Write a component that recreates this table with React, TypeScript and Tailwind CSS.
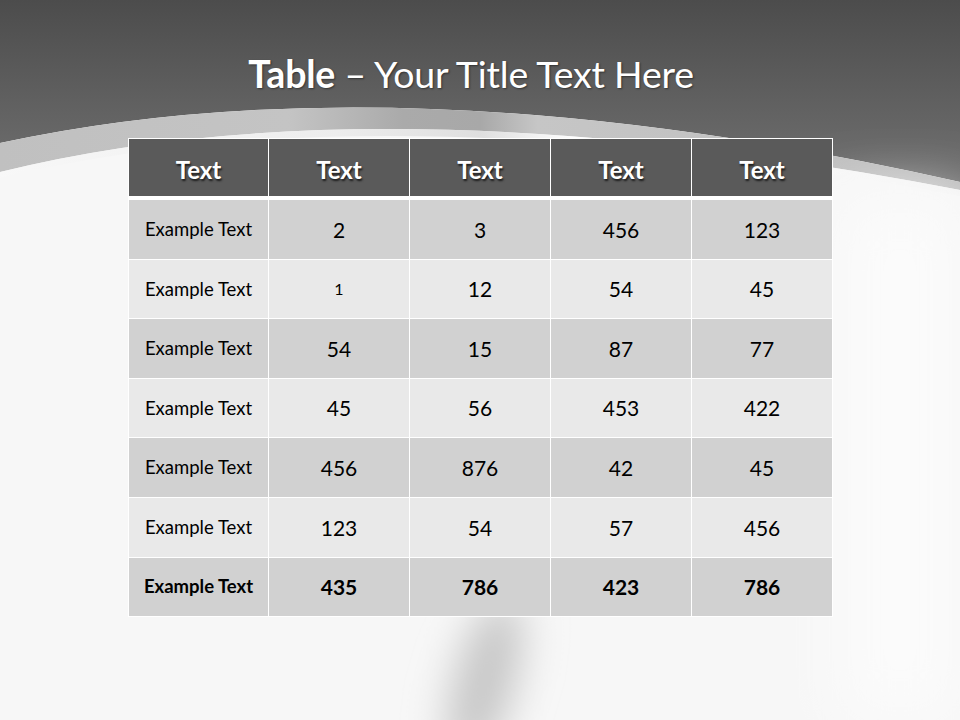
import React from "react";

const rows: { label: string; vals: string[]; bold?: boolean }[] = [
  { label: "Example Text", vals: ["2", "3", "456", "123"] },
  { label: "Example Text", vals: ["1", "12", "54", "45"] },
  { label: "Example Text", vals: ["54", "15", "87", "77"] },
  { label: "Example Text", vals: ["45", "56", "453", "422"] },
  { label: "Example Text", vals: ["456", "876", "42", "45"] },
  { label: "Example Text", vals: ["123", "54", "57", "456"] },
  { label: "Example Text", vals: ["435", "786", "423", "786"], bold: true },
];

function Background() {
  return (
    <svg className="absolute inset-0" width="960" height="720" viewBox="0 0 960 720">
      <defs>
        <linearGradient id="top" x1="0" y1="0" x2="0" y2="1">
          <stop offset="0" stopColor="#4c4c4c" />
          <stop offset="1" stopColor="#707070" />
        </linearGradient>
        <linearGradient id="band" x1="0" y1="0" x2="1" y2="0">
          <stop offset="0" stopColor="#c0c0c0" />
          <stop offset="0.3" stopColor="#c4c4c4" />
          <stop offset="0.42" stopColor="#aaaaaa" />
          <stop offset="0.5" stopColor="#a8a8a8" />
          <stop offset="0.56" stopColor="#c6c6c6" />
          <stop offset="1" stopColor="#bdbdbd" />
        </linearGradient>
        <linearGradient id="hl" x1="0" y1="0" x2="1" y2="0">
          <stop offset="0" stopColor="#f8f8f8" />
          <stop offset="0.35" stopColor="#ececec" />
          <stop offset="0.5" stopColor="#dcdcdc" />
          <stop offset="0.6" stopColor="#ffffff" />
          <stop offset="1" stopColor="#f4f4f4" />
        </linearGradient>
        <filter id="blur" x="-200%" y="-100%" width="500%" height="300%">
          <feGaussianBlur stdDeviation="20" />
        </filter>
        <filter id="blur2" x="-50%" y="-50%" width="200%" height="200%">
          <feGaussianBlur stdDeviation="30" />
        </filter>
      </defs>
      <rect x="0" y="0" width="960" height="720" fill="#f7f7f7" />
      <path d="M0,0 H960 V182 Q400,56 0,143 Z" fill="url(#top)" />
      <path d="M0,143 Q400,56 960,182 L960,190 Q380,78 0,172 Z" fill="url(#band)" />
      <path d="M0,172 Q380,78 960,190 L960,196 Q380,86 0,178 Z" fill="url(#hl)" opacity="0.9" />
      <rect x="840" y="200" width="120" height="520" fill="#fbfbfb" filter="url(#blur2)" />
      <ellipse cx="485" cy="680" rx="30" ry="85" transform="rotate(16 485 680)" fill="#c6c6c6" filter="url(#blur)" />
    </svg>
  );
}

export default function App() {
  const font = { fontFamily: "Lato, 'Liberation Sans', sans-serif" };
  return (
    <div className="relative w-[960px] h-[720px] overflow-hidden" style={font}>
      <Background />
      <div className="relative flex flex-col">
        <div className="h-[138px] flex justify-center pt-[49px] pr-[18px]">
          <h1 className="text-[37.5px] leading-[50px] text-white [text-shadow:1px_1px_2px_rgba(0,0,0,0.45)] tracking-[-0.2px]">
            <span className="font-bold">Table</span> – Your Title Text Here
          </h1>
        </div>
        <div className="ml-[128px] w-[705px] bg-white p-px flex flex-col gap-px">
          <div className="grid grid-cols-[139px_140px_140px_140px_140px] gap-px h-[57px]">
            {["Text", "Text", "Text", "Text", "Text"].map((t, i) => (
              <div
                key={i}
                className="bg-[#5a5a5a] flex items-center justify-center pt-[5px] text-white font-bold text-[24px] [text-shadow:1px_2px_2px_rgba(0,0,0,0.7)]"
              >
                {t}
              </div>
            ))}
          </div>
          <div className="h-[2px]" />
          {rows.map((r, ri) => (
            <div
              key={ri}
              className="grid grid-cols-[139px_140px_140px_140px_140px] gap-px h-[58.6px]"
            >
              <div
                className={`${ri % 2 === 0 ? "bg-[#d1d1d1]" : "bg-[#e9e9e9]"} flex items-center justify-center pt-px text-black text-[18.5px] ${r.bold ? "font-bold" : ""}`}
              >
                {r.label}
              </div>
              {r.vals.map((v, vi) => (
                <div
                  key={vi}
                  className={`${ri % 2 === 0 ? "bg-[#d1d1d1]" : "bg-[#e9e9e9]"} flex items-center justify-center text-black ${ri === 1 && vi === 0 ? "text-[16px]" : "text-[21px]"} ${r.bold ? "font-bold" : ""}`}
                >
                  {v}
                </div>
              ))}
            </div>
          ))}
        </div>
      </div>
    </div>
  );
}
